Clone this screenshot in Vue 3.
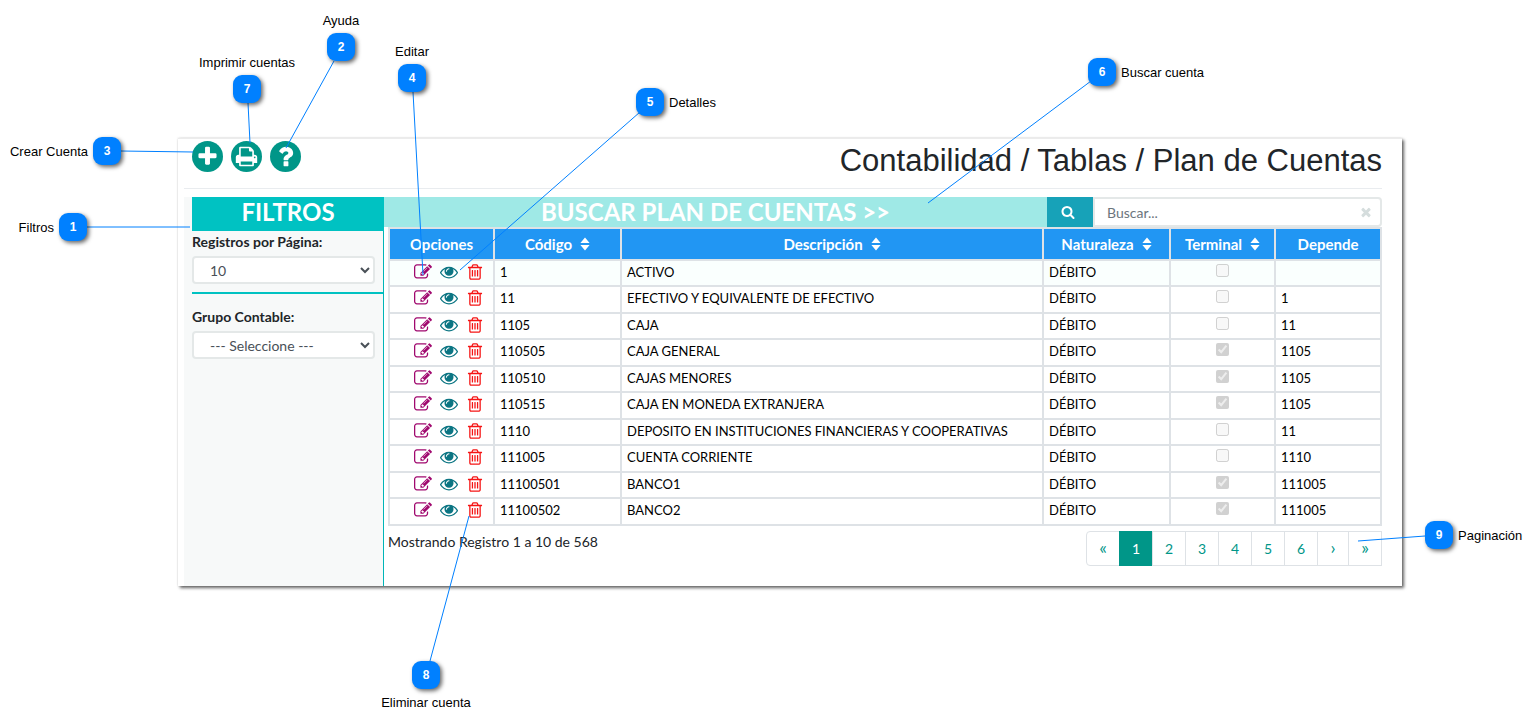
<script setup>
import { ref } from 'vue'

const icons = {
  plus: 'M1600 736v192q0 40-28 68t-68 28h-416v416q0 40-28 68t-68 28h-192q-40 0-68-28t-28-68v-416h-416q-40 0-68-28t-28-68v-192q0-40 28-68t68-28h416v-416q0-40 28-68t68-28h192q40 0 68 28t28 68v416h416q40 0 68 28t28 68z',
  print: 'M448 1536h896v-256h-896v256zm0-640h896v-384h-160q-40 0-68-28t-28-68v-160h-640v640zm1152 64q0-26-19-45t-45-19-45 19-19 45 19 45 45 19 45-19 19-45zm128 0v416q0 13-9.5 22.5t-22.5 9.5h-224v160q0 40-28 68t-68 28h-960q-40 0-68-28t-28-68v-160h-224q-13 0-22.5-9.5t-9.5-22.5v-416q0-79 56.5-135.5t135.5-56.5h64v-544q0-40 28-68t68-28h672q40 0 88 20t76 48l152 152q28 28 48 76t20 88v256h64q79 0 135.5 56.5t56.5 135.5z',
  question: 'M1088 1256v240q0 16-12 28t-28 12h-240q-16 0-28-12t-12-28v-240q0-16 12-28t28-12h240q16 0 28 12t12 28zm316-600q0 54-15.5 101t-35 76.5-55 59.5-57.5 43.5-61 35.5q-41 23-68.5 65t-27.5 67q0 17-12 32.5t-28 15.5h-240q-15 0-25.5-18.5t-10.5-37.5v-45q0-83 65-156.5t143-108.5q59-27 84-56t25-76q0-42-46.5-74t-107.5-32q-65 0-108 29-35 25-107 115-13 16-31 16-12 0-25-8l-164-125q-13-10-15.5-25t5.5-28q160-266 464-266 80 0 161 31t146 83 106 127.5 41 158.5z',
  search: 'M1216 832q0-185-131.5-316.5t-316.5-131.5-316.5 131.5-131.5 316.5 131.5 316.5 316.5 131.5 316.5-131.5 131.5-316.5zm512 832q0 52-38 90t-90 38q-54 0-90-38l-343-342q-179 124-399 124-143 0-273.5-55.5t-225-150-150-225-55.5-273.5 55.5-273.5 150-225 225-150 273.5-55.5 273.5 55.5 225 150 150 225 55.5 273.5q0 220-124 399l343 343q37 37 37 90z',
  times: 'M1490 1322q0 40-28 68l-136 136q-28 28-68 28t-68-28l-294-294-294 294q-28 28-68 28t-68-28l-136-136q-28-28-28-68t28-68l294-294-294-294q-28-28-28-68t28-68l136-136q28-28 68-28t68 28l294 294 294-294q28-28 68-28t68 28l136 136q28 28 28 68t-28 68l-294 294 294 294q28 28 28 68z',
  edit: 'M888 1184l116-116-152-152-116 116v56h96v96h56zm440-720q-16-16-33 1l-350 350q-17 17-1 33t33-1l350-350q17-17 1-33zm80 594v190q0 119-84.5 203.5t-203.5 84.5h-832q-119 0-203.5-84.5t-84.5-203.5v-832q0-119 84.5-203.5t203.5-84.5h832q63 0 117 25 15 7 18 23 3 17-9 29l-49 49q-14 14-32 8-23-6-45-6h-832q-66 0-113 47t-47 113v832q0 66 47 113t113 47h832q66 0 113-47t47-113v-126q0-13 9-22l64-64q15-15 35-7t20 29zm-96-738l288 288-672 672h-288v-288zm444 132l-92 92-288-288 92-92q28-28 68-28t68 28l152 152q28 28 28 68t-28 68z',
  eye: 'M1664 960q-152-236-381-353 61 104 61 225 0 185-131.5 316.5t-316.5 131.5-316.5-131.5-131.5-316.5q0-121 61-225-229 117-381 353 133 205 333.5 326.5t434.5 121.5 434.5-121.5 333.5-326.5zm-720-384q0-20-14-34t-34-14q-125 0-214.5 89.5t-89.5 214.5q0 20 14 34t34 14 34-14 14-34q0-86 61-147t147-61q20 0 34-14t14-34zm848 384q0 34-20 69-140 230-376.5 368.5t-499.5 138.5-499.5-139-376.5-368q-20-35-20-69t20-69q140-229 376.5-368t499.5-139 499.5 139 376.5 368q20 35 20 69z',
  trash: 'M704 736v576q0 14-9 23t-23 9h-64q-14 0-23-9t-9-23v-576q0-14 9-23t23-9h64q14 0 23 9t9 23zm256 0v576q0 14-9 23t-23 9h-64q-14 0-23-9t-9-23v-576q0-14 9-23t23-9h64q14 0 23 9t9 23zm256 0v576q0 14-9 23t-23 9h-64q-14 0-23-9t-9-23v-576q0-14 9-23t23-9h64q14 0 23 9t9 23zm128 724v-948h-896v948q0 22 7 40.5t14.5 27 10.5 8.5h832q3 0 10.5-8.5t14.5-27 7-40.5zm-672-1076h448l-48-117q-7-9-17-11h-317q-10 2-17 11zm928 32v64q0 14-9 23t-23 9h-96v948q0 83-47 143.5t-113 60.5h-832q-66 0-113-58.5t-47-141.5v-952h-96q-14 0-23-9t-9-23v-64q0-14 9-23t23-9h309l70-167q15-37 54-63t79-26h320q40 0 79 26t54 63l70 167h309q14 0 23 9t9 23z',
}

const tools = [
  { icon: 'plus', label: 'Crear Cuenta' },
  { icon: 'print', label: 'Imprimir cuentas' },
  { icon: 'question', label: 'Ayuda' },
]

const columns = [
  { name: 'Opciones', cls: 'c-opt', sort: false },
  { name: 'Código', cls: 'c-code', sort: true },
  { name: 'Descripción', cls: 'c-desc', sort: true },
  { name: 'Naturaleza', cls: 'c-nat', sort: true },
  { name: 'Terminal', cls: 'c-term', sort: true },
  { name: 'Depende', cls: 'c-dep', sort: false },
]

const rows = [
  ['1', 'ACTIVO', false, ''],
  ['11', 'EFECTIVO Y EQUIVALENTE DE EFECTIVO', false, '1'],
  ['1105', 'CAJA', false, '11'],
  ['110505', 'CAJA GENERAL', true, '1105'],
  ['110510', 'CAJAS MENORES', true, '1105'],
  ['110515', 'CAJA EN MONEDA EXTRANJERA', true, '1105'],
  ['1110', 'DEPOSITO EN INSTITUCIONES FINANCIERAS Y COOPERATIVAS', false, '11'],
  ['111005', 'CUENTA CORRIENTE', false, '1110'],
  ['11100501', 'BANCO1', true, '111005'],
  ['11100502', 'BANCO2', true, '111005'],
]

const pages = ['«', '1', '2', '3', '4', '5', '6', '›', '»']

const query = ref('')
const perPage = ref('10')
const group = ref('')

// Callouts: badge corner (x, y), side of the label, and the line to its target
const callouts = [
  { n: 1, text: 'Filtros', side: 'left', x: 59, y: 213, line: [87, 227, 190, 227] },
  { n: 2, text: 'Ayuda', side: 'above', x: 327, y: 33, line: [334, 61, 286, 148] },
  { n: 3, text: 'Crear Cuenta', side: 'left', x: 93, y: 137, line: [121, 151, 193, 152] },
  { n: 4, text: 'Editar', side: 'above', x: 398, y: 64, line: [413, 92, 423, 275] },
  { n: 5, text: 'Detalles', side: 'right', x: 636, y: 88, line: [640, 112, 460, 270] },
  { n: 6, text: 'Buscar cuenta', side: 'right', x: 1088, y: 58, line: [1091, 81, 928, 203] },
  { n: 7, text: 'Imprimir cuentas', side: 'above', x: 233, y: 75, line: [248, 103, 250, 143] },
  { n: 8, text: 'Eliminar cuenta', side: 'below', x: 412, y: 661, line: [430, 661, 469, 516] },
  { n: 9, text: 'Paginación', side: 'right', x: 1425, y: 521, line: [1425, 536, 1358, 541] },
]
</script>

<template>
  <main class="figure">
    <section class="panel">
      <header class="top">
        <div class="tools">
          <button v-for="t in tools" :key="t.icon" type="button" :class="['round', t.icon]" :aria-label="t.label">
            <svg viewBox="0 0 1792 1792"><path :d="icons[t.icon]" /></svg>
          </button>
        </div>
        <h1>Contabilidad / Tablas / Plan de Cuentas</h1>
      </header>

      <div class="body">
        <aside class="filters">
          <h2>FILTROS</h2>
          <div class="filter-list">
            <div class="field">
              <label for="per-page">Registros por Página:</label>
              <select id="per-page" v-model="perPage">
                <option value="10">10</option>
              </select>
            </div>
            <div class="field second">
              <label for="group">Grupo Contable:</label>
              <select id="group" v-model="group">
                <option value="">--- Seleccione ---</option>
              </select>
            </div>
          </div>
        </aside>

        <div class="content">
          <div class="bar">
            <h2>BUSCAR PLAN DE CUENTAS &gt;&gt;</h2>
            <button type="button" class="go" aria-label="Buscar">
              <svg viewBox="0 0 1792 1792"><path :d="icons.search" /></svg>
            </button>
            <div class="search">
              <input v-model="query" type="text" placeholder="Buscar..." aria-label="Buscar cuenta" />
              <button type="button" class="clear" aria-label="Limpiar">
                <svg viewBox="0 0 1792 1792"><path :d="icons.times" /></svg>
              </button>
            </div>
          </div>

          <div class="results">
            <table>
              <thead>
                <tr>
                  <th v-for="c in columns" :key="c.name" :class="c.cls" scope="col">
                    <span class="th">
                      {{ c.name }}
                      <svg v-if="c.sort" viewBox="0 0 10 14"><path d="M5 0.5 9.6 6H0.4zM5 13.5 9.6 8H0.4z" /></svg>
                    </span>
                  </th>
                </tr>
              </thead>
              <tbody>
                <tr v-for="r in rows" :key="r[0]">
                  <td class="options">
                    <div class="actions">
                      <button type="button" class="edit" aria-label="Editar"><svg viewBox="0 0 1792 1792"><path :d="icons.edit" /></svg></button>
                      <button type="button" class="view" aria-label="Detalles"><svg viewBox="0 0 1792 1792"><path :d="icons.eye" /></svg></button>
                      <button type="button" class="del" aria-label="Eliminar"><svg viewBox="0 0 1792 1792"><path :d="icons.trash" /></svg></button>
                    </div>
                  </td>
                  <td>{{ r[0] }}</td>
                  <td>{{ r[1] }}</td>
                  <td>DÉBITO</td>
                  <td><input type="checkbox" disabled :checked="r[2]" :aria-label="'Terminal ' + r[0]" /></td>
                  <td>{{ r[3] }}</td>
                </tr>
              </tbody>
            </table>

            <footer class="foot">
              <p>Mostrando Registro 1 a 10 de 568</p>
              <nav class="pages" aria-label="Paginación">
                <a
                  v-for="p in pages"
                  :key="p"
                  href="#"
                  :class="{ active: p === '1', next: p === '›', arrow: '«›»'.includes(p) }"
                >{{ p }}</a>
              </nav>
            </footer>
          </div>
        </div>
      </div>
    </section>

    <svg class="lines" aria-hidden="true">
      <line v-for="c in callouts" :key="c.n" :x1="c.line[0]" :y1="c.line[1]" :x2="c.line[2]" :y2="c.line[3]" />
    </svg>
    <div
      v-for="c in callouts"
      :key="c.n"
      class="badge"
      :style="{ left: c.x + 'px', top: c.y + 'px' }"
    >
      {{ c.n }}<span :class="['label', c.side]">{{ c.text }}</span>
    </div>
  </main>
</template>

<style>
body {
  margin: 0;
  background: #fff;
}
</style>

<style scoped>
* {
  box-sizing: border-box;
}
.figure {
  position: relative;
  min-height: 100vh;
  padding: 138px 136px 20px 178px;
  overflow: hidden;
  font-family: Lato, "Open Sans", sans-serif;
  font-size: 14px;
  color: #212529;
}
button {
  padding: 0;
  border: 0;
  background: none;
  cursor: pointer;
}
svg {
  display: block;
  fill: currentColor;
}
h1,
h2,
p {
  margin: 0;
}

.panel {
  padding: 0 20px 0 6px;
  border-top: 1px solid #ececec;
  background: #fff;
  box-shadow: 2px 2px 3px rgba(0, 0, 0, 0.6), 0 0 2px rgba(0, 0, 0, 0.15);
}
.top {
  display: flex;
  justify-content: space-between;
  height: 50px;
  padding-left: 8px;
  border-bottom: 1px solid #e9ecef;
}
.tools {
  display: flex;
  gap: 8px;
  padding-top: 2px;
}
.round {
  display: grid;
  place-items: center;
  width: 31px;
  height: 31px;
  border-radius: 50%;
  background: #009688;
  color: #fff;
}
.round svg {
  width: 23px;
  height: 23px;
}
.question svg {
  width: 27px;
  height: 27px;
}
h1 {
  padding-top: 3px;
  font: 400 31px/38px "Liberation Sans", Arial, sans-serif;
}

.body {
  display: flex;
  margin-top: 8px;
}
.filters {
  display: flex;
  flex-direction: column;
  width: 200px;
  padding-left: 8px;
  background: #f7f9f9;
}
h2 {
  font-size: 24px;
  font-weight: 700;
  line-height: 30px;
  text-align: center;
  color: #fff;
}
.filters h2 {
  height: 34px;
  background: #00c2c2;
}
.filter-list {
  flex: 1;
  border-right: 1px solid #00b5b8;
}
.field {
  padding: 2px 8px 8px 0;
  border-bottom: 2px solid #00c2c2;
}
.field.second {
  padding-top: 14px;
  border-bottom: 0;
}
.field label {
  display: block;
  height: 23px;
  font-weight: 700;
  line-height: 18px;
}
select {
  display: block;
  width: 100%;
  height: 28px;
  padding: 0 0 0 12px;
  border: 2px solid #e4e8e8;
  border-radius: 4px;
  background: #fff;
  color: #495057;
  font: 14px Lato, sans-serif;
}

.content {
  flex: 1;
  min-width: 0;
}
.bar {
  display: flex;
  height: 30px;
}
.bar h2 {
  flex: 1;
  background: #9fe9e6;
}
.go {
  display: grid;
  place-items: center;
  width: 46px;
  padding-right: 4px;
  background: #17a2b8;
  color: #fff;
}
.go svg {
  width: 14px;
  height: 14px;
}
.search {
  display: flex;
  align-items: center;
  width: 289px;
  padding: 0 7px 0 12px;
  border: 2px solid #e4e8e8;
  border-radius: 0 4px 4px 0;
}
.search input {
  flex: 1;
  min-width: 0;
  padding: 0;
  border: 0;
  outline: 0;
  background: none;
  color: #495057;
  font: 14px Lato, sans-serif;
}
.search input::placeholder {
  color: #6c757d;
}
.clear {
  color: #d5dddd;
}
.clear svg {
  width: 14px;
  height: 14px;
}

.results {
  padding-left: 4px;
}
table {
  width: 100%;
  border-collapse: collapse;
  table-layout: fixed;
}
th,
td {
  border: 2px solid #dee2e6;
}
td {
  height: 26px;
  padding: 3px 5px 0;
  color: #000;
  font-size: 13px;
  line-height: 16px;
  vertical-align: top;
}
tbody tr:nth-child(even) td {
  height: 27px;
}
tbody tr:first-child {
  background: #fafffe;
}
th {
  height: 32px;
  padding: 0 6px;
  background: #2196f3;
  color: #fff;
  font-size: 15px;
  font-weight: 700;
  line-height: 16px;
}
.th {
  display: flex;
  align-items: center;
  justify-content: center;
  gap: 8px;
}
.th svg {
  width: 10px;
  height: 14px;
}
.c-opt,
.c-term {
  width: 105px;
}
.c-code,
.c-nat {
  width: 127px;
}
.c-dep {
  width: 106px;
}
td.options {
  padding-top: 2px;
}
.actions {
  display: flex;
  justify-content: center;
  gap: 8px;
  padding-left: 14px;
}
.actions svg {
  width: 18px;
  height: 18px;
}
.edit {
  color: #a0086e;
}
.view {
  color: #0b7583;
}
.del {
  color: #f51414;
}
td input {
  display: block;
  width: 13px;
  height: 13px;
  margin: 0 auto;
}

.foot {
  display: flex;
  justify-content: space-between;
  padding: 5px 0 20px;
}
.foot p {
  padding-top: 1px;
  line-height: 20px;
}
.pages {
  display: flex;
}
.pages a {
  width: 34px;
  height: 35px;
  margin-left: -1px;
  border: 1px solid #dee2e6;
  color: #009688;
  line-height: 33px;
  text-align: center;
  text-decoration: none;
}
.pages a:first-child {
  border-radius: 4px 0 0 4px;
}
.pages .next {
  width: 32px;
}
.pages .arrow {
  font-size: 18px;
  line-height: 31px;
}
.pages .active {
  border-color: #009688;
  background: #009688;
  color: #fff;
}

.lines {
  position: absolute;
  inset: 0;
  width: 100%;
  height: 100%;
  pointer-events: none;
}
.lines line {
  stroke: #0080ff;
  stroke-width: 1;
}
.badge {
  position: absolute;
  width: 28px;
  height: 28px;
  border-radius: 9px;
  background: #0080ff;
  box-shadow: 2px 2px 4px rgba(0, 0, 0, 0.6);
  color: #fff;
  font: 700 12px/28px "Liberation Sans", Arial, sans-serif;
  text-align: center;
}
.label {
  position: absolute;
  color: #000;
  font-size: 13px;
  font-weight: 400;
  line-height: 16px;
  white-space: nowrap;
}
.left {
  top: 7px;
  right: 33px;
}
.right {
  top: 7px;
  left: 33px;
}
.above,
.below {
  left: 50%;
  transform: translateX(-50%);
}
.above {
  bottom: 32px;
}
.below {
  top: 34px;
}
</style>
